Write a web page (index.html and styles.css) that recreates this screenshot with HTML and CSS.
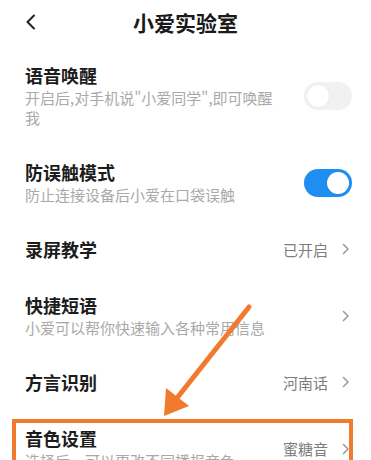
FILE: index.html
```html
<!DOCTYPE html>
<html lang="zh-CN">
<head>
<meta charset="utf-8">
<title>小爱实验室</title>
<link rel="stylesheet" href="styles.css">
</head>
<body>
<div class="screen">
  <header class="topbar">
    <span class="back">
      <svg width="11" height="16" viewBox="0 0 11 16"><path d="M9 1.5 L2.5 8 L9 14.5" fill="none" stroke="#222" stroke-width="2" stroke-linecap="round" stroke-linejoin="round"/></svg>
    </span>
    <h1 class="title">小爱实验室</h1>
    <span></span>
  </header>
  <ul class="list">
    <li class="row">
      <div class="text">
        <div class="name">语音唤醒</div>
        <div class="desc">开启后,对手机说"小爱同学",即可唤醒我</div>
      </div>
      <span class="switch"></span>
    </li>
    <li class="row">
      <div class="text">
        <div class="name">防误触模式</div>
        <div class="desc">防止连接设备后小爱在口袋误触</div>
      </div>
      <span class="switch on"></span>
    </li>
    <li class="row">
      <div class="text">
        <div class="name">录屏教学</div>
      </div>
      <span class="value">已开启</span>
      <svg class="chev" width="8" height="12" viewBox="0 0 8 12"><path d="M1.5 1.5 L6 6 L1.5 10.5" fill="none" stroke="#999" stroke-width="1.5" stroke-linecap="round" stroke-linejoin="round"/></svg>
    </li>
    <li class="row">
      <div class="text">
        <div class="name">快捷短语</div>
        <div class="desc">小爱可以帮你快速输入各种常用信息</div>
      </div>
      <svg class="chev" width="8" height="12" viewBox="0 0 8 12"><path d="M1.5 1.5 L6 6 L1.5 10.5" fill="none" stroke="#999" stroke-width="1.5" stroke-linecap="round" stroke-linejoin="round"/></svg>
    </li>
    <li class="row">
      <div class="text">
        <div class="name">方言识别</div>
      </div>
      <span class="value">河南话</span>
      <svg class="chev" width="8" height="12" viewBox="0 0 8 12"><path d="M1.5 1.5 L6 6 L1.5 10.5" fill="none" stroke="#999" stroke-width="1.5" stroke-linecap="round" stroke-linejoin="round"/></svg>
    </li>
    <li class="row">
      <div class="text">
        <div class="name">音色设置</div>
        <div class="desc">选择后，可以更改不同播报音色</div>
      </div>
      <span class="value">蜜糖音</span>
      <svg class="chev" width="8" height="12" viewBox="0 0 8 12"><path d="M1.5 1.5 L6 6 L1.5 10.5" fill="none" stroke="#999" stroke-width="1.5" stroke-linecap="round" stroke-linejoin="round"/></svg>
    </li>
  </ul>
  <div class="highlight"></div>
  <svg class="arrow" width="371" height="460" viewBox="0 0 371 460">
    <line x1="249" y1="307" x2="177" y2="398" stroke="#f27a2e" stroke-width="5" stroke-linecap="round"/>
    <polygon points="164,416 166,388 189,406" fill="#f27a2e"/>
  </svg>
</div>
</body>
</html>
```

FILE: styles.css
```css
* { box-sizing: border-box; }
html, body { margin: 0; padding: 0; background: #fff; }
body {
  font-family: "Noto Sans CJK SC", "Noto Sans", sans-serif;
  color: #1c1c1c;
}
.screen {
  position: relative;
  width: 371px;
  height: 460px;
  overflow: hidden;
}
.topbar {
  height: 44px;
  display: grid;
  grid-template-columns: 1fr auto 1fr;
  align-items: center;
}
.back {
  padding-left: 25px;
  display: flex;
  align-items: center;
}
.title {
  margin: 0;
  font-size: 21px;
  font-weight: 700;
  line-height: 28px;
  color: #1a1a1a;
}
.list {
  list-style: none;
  margin: 0;
  padding: 3px 0 0;
}
.row {
  display: flex;
  align-items: center;
  gap: 20px;
  padding: 16px 20px 16px 25px;
}
.text {
  flex: 1;
  min-width: 0;
}
.name {
  font-size: 18px;
  line-height: 24px;
  font-weight: 700;
  color: #1c1c1c;
}
.desc {
  margin-top: 1px;
  font-size: 15px;
  line-height: 20px;
  color: #a9a9a9;
}
.value {
  font-size: 15px;
  color: #7d7d7d;
  margin-right: -6px;
}
.chev { flex: none; margin-right: 1px; }
.switch {
  flex: none;
  position: relative;
  width: 48px;
  height: 28px;
  border-radius: 14px;
  background: #f1f1f1;
  margin-right: -1px;
}
.switch::after {
  content: "";
  position: absolute;
  top: 3px;
  left: 3px;
  width: 22px;
  height: 22px;
  border-radius: 50%;
  background: #fff;
  box-shadow: 0 0 2px rgba(0,0,0,0.08);
}
.switch.on { background: #1e8ff0; }
.switch.on::after { left: 23px; }
.highlight {
  position: absolute;
  left: 12px;
  top: 419px;
  width: 341px;
  height: 80px;
  border: 4px solid #f27a2e;
}
.arrow {
  position: absolute;
  left: 0;
  top: 0;
  pointer-events: none;
}
```
